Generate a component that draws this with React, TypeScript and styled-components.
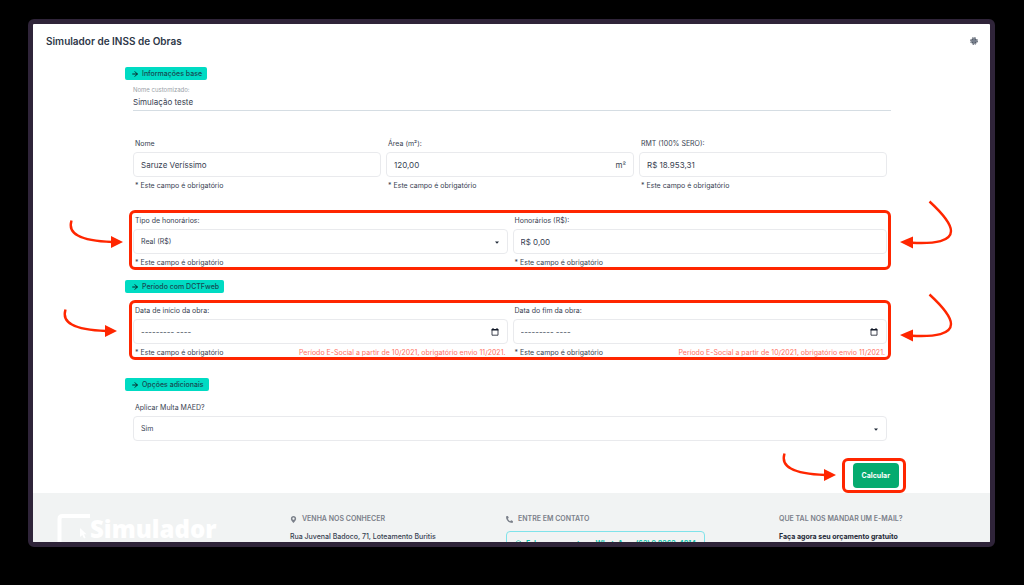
import React, { useState } from "react";
import styled, { createGlobalStyle } from "styled-components";
import { ArrowRight } from "lucide-react";
import { FaMapMarkerAlt, FaPhoneAlt, FaWhatsapp } from "react-icons/fa";

const ink = "#374151";
const mark = "#ff2600";

const GlobalStyle = createGlobalStyle`
  * { box-sizing: border-box; }
  body { margin: 0; background: #000; }
  body, input, select, button { font-family: Inter, "Liberation Sans", sans-serif; }
`;

const Stage = styled.div`
  display: flex;
  height: 100vh;
  padding: 19px 29px 38px 28px;
`;

const Frame = styled.div`
  flex: 1;
  display: flex;
  flex-direction: column;
  overflow: hidden;
  border: 5px solid #2f2439;
  border-radius: 6px;
  background: #fff;
  color: ${ink};
`;

const Header = styled.header`
  display: flex;
  flex: none;
  align-items: center;
  justify-content: space-between;
  height: 33px;
  padding: 0 12px 0 13px;
`;

const Title = styled.h1`
  margin: 0;
  font-size: 10px;
  font-weight: 600;
  color: #2d3748;
`;

const IconButton = styled.button`
  display: flex;
  padding: 0;
  border: 0;
  background: none;
  color: #2d3748;
`;

const Form = styled.form`
  flex: none;
  padding: 10px 99px 5px 92px;
`;

const Section = styled.section<{ $top?: number }>`
  margin-top: ${(p) => p.$top ?? 0}px;
`;

const Tag = styled.h2`
  display: flex;
  align-items: center;
  gap: 3px;
  width: fit-content;
  height: 13px;
  margin: 0;
  padding: 0 5px 0 6px;
  border-radius: 2px;
  background: #00dbc3;
  color: #174a52;
  font-size: 7px;
  font-weight: 500;

  svg { color: #08262b; }
`;

const NameField = styled.div`
  display: flex;
  flex-direction: column;
  margin: 5px 0 0 8px;

  label {
    color: #9a9fa8;
    font-size: 6px;
    line-height: 9px;
  }
  input {
    height: 17px;
    padding: 0;
    border: 0;
    border-bottom: 1px solid #d5dde3;
    color: ${ink};
    font-size: 8px;
  }
`;

const Row = styled.div<{ $cols: number; $top: number }>`
  position: relative;
  display: grid;
  grid-template-columns: repeat(${(p) => p.$cols}, 1fr);
  gap: 5px;
  margin: ${(p) => p.$top}px 4px 0 8px;
`;

const FieldBox = styled.div`
  display: flex;
  flex-direction: column;
  gap: 4px;
  min-width: 0;
`;

const Label = styled.label`
  padding-left: 2px;
  font-size: 7px;
  line-height: 9px;
`;

const Control = styled.div`
  position: relative;
  display: flex;
  align-items: center;
  height: 25px;
  border: 1px solid #e9eaed;
  border-radius: 4px;
  font-size: 8px;

  input, select {
    flex: 1;
    min-width: 0;
    height: 100%;
    padding: 0 7px;
    border: 0;
    background: none;
    color: ${ink};
    font-size: 8px;
    outline: none;
  }
  input::placeholder {
    color: ${ink};
    opacity: 1;
  }
  select {
    appearance: none;
    font-size: 7px;
  }
`;

const Suffix = styled.span`
  padding-right: 7px;
`;

const PickerButton = styled.button`
  display: flex;
  margin-right: 8px;
  padding: 0;
  border: 0;
  background: none;
`;

const Caret = styled.svg`
  position: absolute;
  right: 8px;
  top: 11px;
  pointer-events: none;
`;

const Notes = styled.div`
  display: flex;
  justify-content: space-between;
  padding: 0 2px;
  font-size: 7px;
  line-height: 10px;
  white-space: nowrap;
`;

const Warning = styled.span`
  color: #ff6f63;
`;

const Highlight = styled.div`
  position: absolute;
  inset: -6px -4px -2px;
  border: 3px solid ${mark};
  border-radius: 6px;
  pointer-events: none;
`;

const ButtonHighlight = styled(Highlight)`
  inset: -5px -7px -5px -11px;
`;

const ArrowSvg = styled.svg<{ $side: "left" | "right"; $x: number; $y: number }>`
  position: absolute;
  ${(p) => p.$side}: ${(p) => p.$x}px;
  top: ${(p) => p.$y}px;
  overflow: visible;
  pointer-events: none;
`;

const Actions = styled.div`
  display: flex;
  justify-content: flex-end;
  margin: 22px -8px 0 0;
`;

const ButtonWrap = styled.div`
  position: relative;
`;

const Submit = styled.button`
  display: block;
  height: 25px;
  padding: 0 9px;
  border: 0;
  border-radius: 4px;
  background: #05ab6f;
  color: #fff;
  font-size: 7px;
  font-weight: 700;
`;

const Footer = styled.footer`
  flex: 1 0 auto;
  display: grid;
  grid-template-columns: 233fr 216fr 273fr 181fr;
  padding: 21px 30px 20px 24px;
  background: #f1f3f3;
`;

const Brand = styled.div`
  display: flex;
  color: #fff;
  font-family: "Open Sans", "Noto Sans", sans-serif;
  font-size: 24px;
  font-weight: 800;
  line-height: 30px;
`;

const FooterTitle = styled.h3`
  display: flex;
  align-items: center;
  gap: 5px;
  margin: 0 0 8px;
  color: #7b808a;
  font-size: 7px;
  font-weight: 600;
  line-height: 10px;
`;

const FooterText = styled.p<{ $strong?: boolean }>`
  margin: 0;
  color: ${(p) => (p.$strong ? "#1f2937" : "#374151")};
  font-size: 7px;
  font-weight: ${(p) => (p.$strong ? 700 : 500)};
  line-height: 10px;
`;

const WhatsLink = styled.a`
  display: flex;
  align-items: center;
  gap: 4px;
  width: fit-content;
  height: 24px;
  margin-top: -1px;
  padding: 0 8px;
  border: 1px solid #7fe3ea;
  border-radius: 4px;
  color: #10bfa8;
  font-size: 7px;
  font-weight: 700;
  text-decoration: none;
  white-space: nowrap;
`;

const required = "* Este campo é obrigatório";
const period = "Período E-Social a partir de 10/2021, obrigatório envio 11/2021.";

type FieldProps = {
  id: string;
  label: string;
  note?: string;
  warning?: string;
  children: React.ReactNode;
};

function Field({ id, label, note, warning, children }: FieldProps) {
  return (
    <FieldBox>
      <Label htmlFor={id}>{label}</Label>
      <Control>{children}</Control>
      {note && (
        <Notes>
          <span>{note}</span>
          {warning && <Warning>{warning}</Warning>}
        </Notes>
      )}
    </FieldBox>
  );
}

function MonthInput({ id }: { id: string }) {
  return (
    <>
      <input id={id} placeholder="--------- ----" />
      <PickerButton type="button" aria-label="Abrir calendário">
        <svg width="8" height="8" viewBox="0 0 8 8" aria-hidden>
          <path d="M1 1.500H7V7.200H1z" fill="none" stroke="#111827" strokeWidth=".8" />
          <path d="M.6 1H7.400V2.500H.6zM1.500 0H2.500V1H1.500zM5.500 0H6.500V1H5.500z" fill="#111827" />
        </svg>
      </PickerButton>
    </>
  );
}

function SelectCaret() {
  return (
    <Caret width="4" height="3" viewBox="0 0 4 3" aria-hidden>
      <path d="M0 .5H4L2 2.700z" fill="#1f2937" />
    </Caret>
  );
}

function Gear() {
  return (
    <svg width="8" height="8" viewBox="0 0 8 8" aria-hidden>
      <circle cx="4" cy="4" r="3.300" fill="none" stroke="#2d3748" strokeDasharray="1.600 .99" />
      <circle cx="4" cy="4" r="2.200" fill="#b4bac4" stroke="#2d3748" />
      <circle cx="4" cy="4" r=".8" fill="#2d3748" />
    </svg>
  );
}

function ArrowIn({ x, y }: { x: number; y: number }) {
  return (
    <ArrowSvg $side="left" $x={x} $y={y} width="56" height="30" viewBox="0 0 56 30" aria-hidden>
      <path d="M2.500 0.500C-1.500 13 10 21 43 22" fill="none" stroke={mark} strokeWidth="2.400" />
      <path d="M42 16L54 22L42 28z" fill={mark} />
    </ArrowSvg>
  );
}

function ArrowBack({ x, y }: { x: number; y: number }) {
  return (
    <ArrowSvg $side="right" $x={x} $y={y} width="54" height="50" viewBox="0 0 54 50" aria-hidden>
      <path
        d="M29.500 1.500C42 13 51 24 51 31C51 41 36 44 12 42.800"
        fill="none"
        stroke={mark}
        strokeWidth="2.400"
      />
      <path d="M0 42L13 36.500V48.500z" fill={mark} />
    </ArrowSvg>
  );
}

function SectionTag({ children }: { children: React.ReactNode }) {
  return (
    <Tag>
      <ArrowRight size={8} strokeWidth={3} />
      {children}
    </Tag>
  );
}

export default function App() {
  const [custom, setCustom] = useState("Simulação teste");
  return (
    <Stage>
      <GlobalStyle />
      <Frame>
        <Header>
          <Title>Simulador de INSS de Obras</Title>
          <IconButton type="button" aria-label="Configurações">
            <Gear />
          </IconButton>
        </Header>

        <Form onSubmit={(e) => e.preventDefault()}>
          <Section>
            <SectionTag>Informações base</SectionTag>
            <NameField>
              <label htmlFor="custom">Nome customizado:</label>
              <input id="custom" value={custom} onChange={(e) => setCustom(e.target.value)} />
            </NameField>
            <Row $cols={3} $top={28}>
              <Field id="nome" label="Nome" note={required}>
                <input id="nome" defaultValue="Saruze Veríssimo" />
              </Field>
              <Field id="area" label="Área (m²):" note={required}>
                <input id="area" defaultValue="120,00" />
                <Suffix>m²</Suffix>
              </Field>
              <Field id="rmt" label="RMT (100% SERO):" note={required}>
                <input id="rmt" defaultValue="R$ 18.953,31" />
              </Field>
            </Row>
            <Row $cols={2} $top={25}>
              <Field id="tipo" label="Tipo de honorários:" note={required}>
                <select id="tipo">
                  <option>Real (R$)</option>
                </select>
                <SelectCaret />
              </Field>
              <Field id="honorarios" label="Honorários (R$):" note={required}>
                <input id="honorarios" defaultValue="R$ 0,00" />
              </Field>
              <Highlight />
              <ArrowIn x={-64} y={4} />
              <ArrowBack x={-67} y={-16} />
            </Row>
          </Section>

          <Section $top={12}>
            <SectionTag>Período com DCTFweb</SectionTag>
            <Row $cols={2} $top={13}>
              <Field id="inicio" label="Data de início da obra:" note={required} warning={period}>
                <MonthInput id="inicio" />
              </Field>
              <Field id="fim" label="Data do fim da obra:" note={required} warning={period}>
                <MonthInput id="fim" />
              </Field>
              <Highlight />
              <ArrowIn x={-70} y={3} />
              <ArrowBack x={-67} y={-13} />
            </Row>
          </Section>

          <Section $top={20}>
            <SectionTag>Opções adicionais</SectionTag>
            <Row $cols={1} $top={12}>
              <Field id="multa" label="Aplicar Multa MAED?">
                <select id="multa">
                  <option>Sim</option>
                </select>
                <SelectCaret />
              </Field>
            </Row>
          </Section>

          <Actions>
            <ButtonWrap>
              <Submit type="submit">Calcular</Submit>
              <ButtonHighlight />
              <ArrowIn x={-71} y={-10} />
            </ButtonWrap>
          </Actions>
        </Form>

        <Footer>
          <Brand>
            <svg width="33" height="40" viewBox="0 0 33 40" aria-hidden>
              <path d="M2.500 40V5Q2.500 2 5.500 2H33" fill="none" stroke="#fff" strokeWidth="4" />
              <path d="M23 14v9l2.300-2 1.700 3.500 1.600-.8-1.600-3.500H29.500z" fill="#fff" />
            </svg>
            Simulador
          </Brand>
          <div>
            <FooterTitle>
              <FaMapMarkerAlt size={7} />
              VENHA NOS CONHECER
            </FooterTitle>
            <FooterText>Rua Juvenal Badoco, 71, Loteamento Buritis</FooterText>
          </div>
          <div>
            <FooterTitle>
              <FaPhoneAlt size={7} />
              ENTRE EM CONTATO
            </FooterTitle>
            <WhatsLink href="#whatsapp">
              <FaWhatsapp size={7} />
              Fale com a gente no WhatsApp: (62) 9 8262-4814
            </WhatsLink>
          </div>
          <div>
            <FooterTitle>QUE TAL NOS MANDAR UM E-MAIL?</FooterTitle>
            <FooterText $strong>Faça agora seu orçamento gratuíto</FooterText>
          </div>
        </Footer>
      </Frame>
    </Stage>
  );
}
